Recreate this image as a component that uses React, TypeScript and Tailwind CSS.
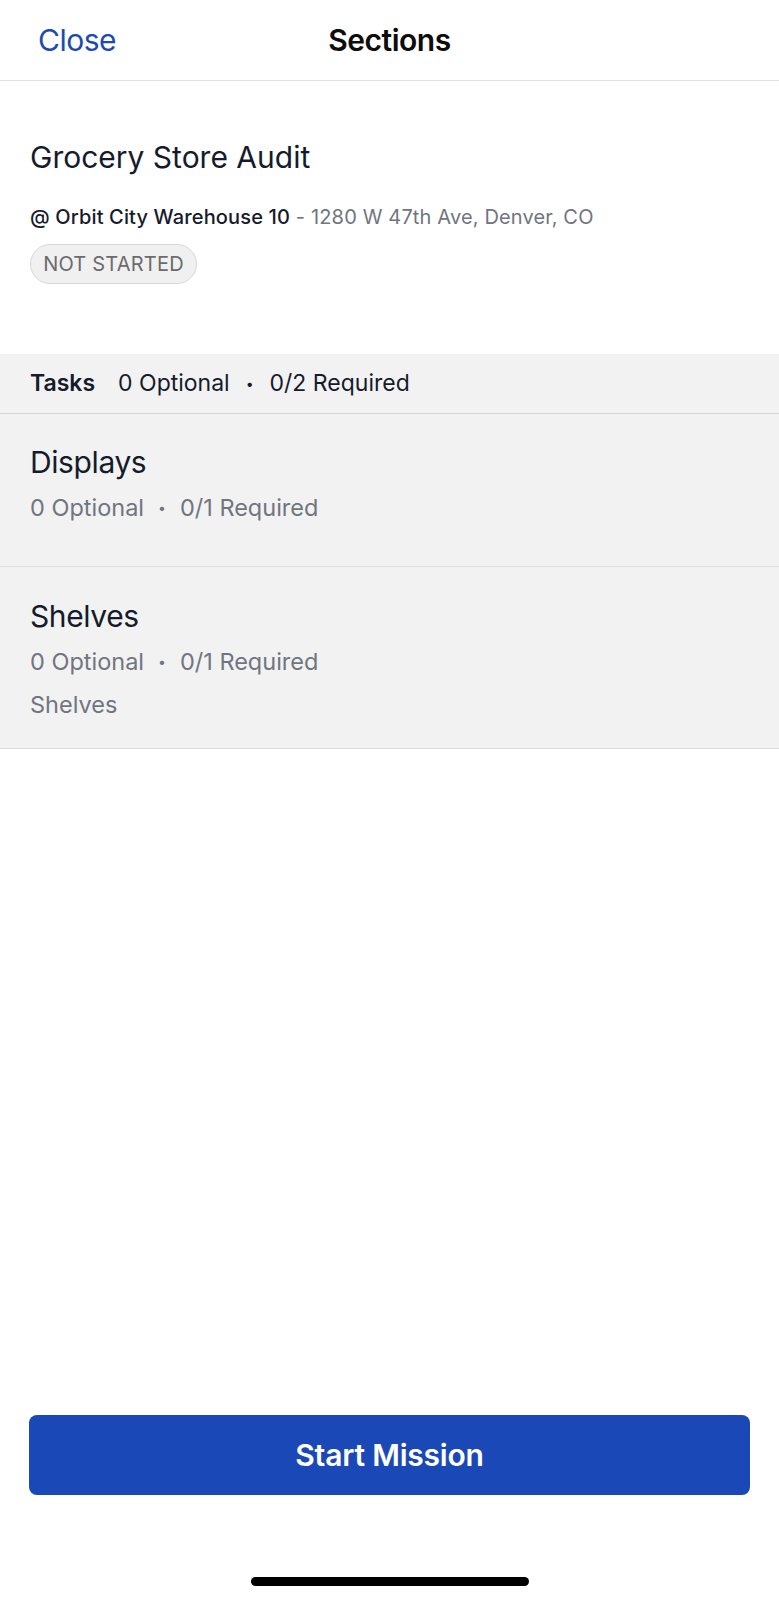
import React from "react";

const font = { fontFamily: "Inter, 'Noto Sans', sans-serif" };

function SectionRow({
  title,
  sub,
  extra,
  className,
}: {
  title: string;
  sub: [string, string];
  extra?: string;
  className: string;
}) {
  return (
    <div className={`bg-[#f2f2f2] border-b border-[#dcdcdc] pl-[30px] ${className}`}>
      <div className="text-[30px] leading-[36px] text-[#151b2c] tracking-[-0.4px]">{title}</div>
      <div className="mt-[14px] flex items-center text-[23.5px] leading-[28px] text-[#707580]">
        <span>{sub[0]}</span>
        <span className="mx-[14px] text-[14px]">•</span>
        <span>{sub[1]}</span>
      </div>
      {extra && (
        <div className="mt-[15px] text-[23.5px] leading-[28px] text-[#707580]">{extra}</div>
      )}
    </div>
  );
}

export default function App() {
  return (
    <div style={font} className="w-[779px] h-[1600px] bg-white flex flex-col">
      {/* Header */}
      <div className="h-[81px] border-b border-[#e2e2e2] flex items-center px-[38px] relative shrink-0">
        <span className="text-[30px] text-[#1d4ab0] tracking-[-0.5px]">Close</span>
        <span className="absolute left-0 right-0 text-center text-[30px] font-semibold text-[#0d0d0d] tracking-[-0.5px] pointer-events-none">
          Sections
        </span>
      </div>

      {/* Title block */}
      <div className="pl-[30px] pt-[58px] pb-[70px] shrink-0">
        <div className="text-[30px] leading-[36px] text-[#151b2c]">Grocery Store Audit</div>
        <div className="mt-[28px] text-[20px] leading-[28px] tracking-[0.15px]">
          <span className="font-medium text-[#151b2c]">@ Orbit City Warehouse 10</span>
          <span className="text-[#707580]"> - 1280 W 47th Ave, Denver, CO</span>
        </div>
        <div className="mt-[13px] h-[40px] w-[167px] rounded-full border-[1.5px] border-[#d8d8d8] bg-[#f0f0f0] flex items-center justify-center text-[20px] text-[#6b6b6b] tracking-[0.2px]">
          NOT STARTED
        </div>
      </div>

      {/* Tasks bar */}
      <div className="h-[60px] bg-[#f2f2f2] border-b border-[#d6d6d6] flex items-center pl-[30px] text-[23px] text-[#151b2c] shrink-0">
        <span className="font-semibold">Tasks</span>
        <span className="ml-[23px]">0 Optional</span>
        <span className="mx-[16px] text-[14px]">•</span>
        <span>0/2 Required</span>
      </div>

      <SectionRow className="pt-[30px] pb-[44px]" title="Displays" sub={["0 Optional", "0/1 Required"]} />
      <SectionRow className="pt-[31px] pb-[29px]" title="Shelves" sub={["0 Optional", "0/1 Required"]} extra="Shelves" />

      <div className="flex-1" />

      {/* Button */}
      <div className="px-[29px] shrink-0">
        <button className="w-full h-[80px] rounded-[8px] bg-[#1a48b7] text-white text-[30px] font-semibold tracking-[-0.2px]">
          Start Mission
        </button>
      </div>

      <div className="h-[82px] shrink-0" />
      <div className="flex justify-center shrink-0">
        <div className="w-[278px] h-[9px] rounded-full bg-black" />
      </div>
      <div className="h-[14px] shrink-0" />
    </div>
  );
}
